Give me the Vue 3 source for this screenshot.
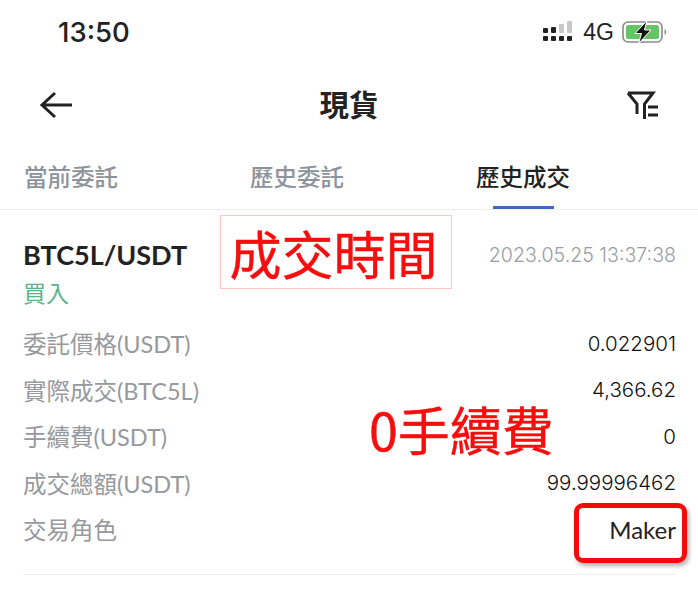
<script setup>
const rows = [
  { label: '委託價格(USDT)', value: '0.022901' },
  { label: '實際成交(BTC5L)', value: '4,366.62' },
  { label: '手續費(USDT)', value: '0' },
  { label: '成交總額(USDT)', value: '99.99996462' },
  { label: '交易角色', value: 'Maker', text: true }
]
const tabs = ['當前委託', '歷史委託', '歷史成交']
</script>

<template>
  <div class="page">
    <div class="status">
      <span class="time">13:50</span>
      <div class="status-right">
        <svg class="signal" width="32" height="22" viewBox="0 0 32 22">
          <g fill="#222">
            <rect x="1" y="7" width="5" height="5" rx="1" /><rect x="9" y="6" width="5" height="6" rx="1" />
            <rect x="1" y="15" width="5" height="5" rx="1" /><rect x="9" y="15" width="5" height="5" rx="1" />
            <rect x="17" y="15" width="5" height="5" rx="1" /><rect x="25" y="15" width="5" height="5" rx="1" />
          </g>
          <g fill="#c8c8c8">
            <rect x="17" y="3" width="5" height="9" rx="1" /><rect x="25" y="0" width="5" height="12" rx="1" />
          </g>
        </svg>
        <span class="net">4G</span>
        <svg width="46" height="24" viewBox="0 0 46 24">
          <rect x="1" y="2" width="39" height="20" rx="5" fill="none" stroke="#8a8a8a" stroke-width="1.6" />
          <rect x="4" y="5" width="33" height="14" rx="2.500" fill="#64c466" />
          <path d="M42.500 9 C44.500 10 44.500 14 42.500 15 Z" fill="#8a8a8a" />
          <path d="M25 0.500 L13 13.500 H19.500 L16.500 23.500 L29 10 H22.500 Z" fill="#111" stroke="#fff" stroke-width="1" />
        </svg>
      </div>
    </div>

    <div class="nav">
      <svg class="back" width="34" height="28" viewBox="0 0 34 28">
        <path d="M16 2 L3 14 L16 26 M3 14 H33" fill="none" stroke="#222" stroke-width="3" />
      </svg>
      <span class="title">現貨</span>
      <svg class="filter" width="34" height="30" viewBox="0 0 34 30">
        <path d="M1 3 H26 L17.500 14 V29 M1 3 L10 14 V24" fill="none" stroke="#222" stroke-width="3" />
        <path d="M21 17 H31 M21 25 H31" fill="none" stroke="#222" stroke-width="3" />
      </svg>
    </div>

    <div class="tabs">
      <div v-for="(t, i) in tabs" :key="t" class="tab" :class="{ active: i === 2 }">{{ t }}</div>
    </div>

    <div class="card">
      <div class="head">
        <span class="pair">BTC5L/USDT</span>
        <span class="date">2023.05.25 13:37:38</span>
      </div>
      <div class="side">買入</div>
      <div class="rows">
        <div v-for="r in rows" :key="r.label" class="row">
          <span class="label">{{ r.label }}</span>
          <span class="value" :class="{ word: r.text }">{{ r.value }}</span>
        </div>
      </div>
    </div>

    <div class="note time-note">成交時間</div>
    <div class="note fee-note">0手續費</div>
    <div class="maker-box"></div>
  </div>
</template>

<style scoped>
.page {
  position: relative;
  width: 698px;
  height: 602px;
  overflow: hidden;
  background: #fff;
  font-family: "Liberation Sans", "Noto Sans CJK TC", sans-serif;
  color: #222;
}
.status {
  height: 64px;
  display: flex;
  align-items: center;
  justify-content: space-between;
  padding: 0 30px 0 58px;
}
.time {
  font-family: Inter, sans-serif;
  font-size: 27.500px;
  font-weight: 500;
}
.status-right {
  display: flex;
  align-items: center;
  gap: 8px;
}
.signal {
  margin-right: 1px;
}
.net {
  font-size: 23px;
  font-family: "Liberation Sans", sans-serif;
}
.nav {
  height: 80px;
  display: flex;
  align-items: center;
  justify-content: space-between;
  padding: 0 39px;
}
.back {
  margin-top: 2px;
}
.filter {
  margin-right: -2px;
  margin-top: 1px;
}
.title {
  font-size: 29.500px;
  font-weight: 700;
  font-family: "Noto Sans CJK TC", sans-serif;
  margin-bottom: 2px;
  margin-left: -2px;
}
.tabs {
  height: 66px;
  display: grid;
  grid-template-columns: 226px 226px 1fr;
  padding-left: 24px;
  border-bottom: 1px solid #eee;
  box-sizing: border-box;
}
.tab {
  position: relative;
  font-family: "Noto Sans CJK TC", sans-serif;
  font-size: 23.500px;
  font-weight: 500;
  color: #8d939c;
  line-height: 64px;
}
.tab.active {
  color: #222;
}
.tab.active::after {
  content: "";
  position: absolute;
  left: 17px;
  bottom: 0;
  width: 61px;
  height: 3px;
  background: #3f68c4;
}
.card {
  margin: 0 22px 0 23px;
  padding: 27px 0 0;
  height: 365px;
  box-sizing: border-box;
  border-bottom: 1px solid #eee;
}
.head {
  display: flex;
  justify-content: space-between;
  align-items: center;
  height: 34px;
}
.pair {
  font-family: Lato, sans-serif;
  font-size: 27px;
  font-weight: 700;
  color: #222;
}
.date {
  font-family: Inter, sans-serif;
  font-size: 19.600px;
  font-weight: 300;
  color: #9a9da3;
  margin-top: 1px;
}
.side {
  font-family: "Noto Sans CJK TC", sans-serif;
  font-size: 23px;
  color: #5cb38b;
  line-height: 32px;
  margin-top: 5px;
}
.rows {
  margin-top: 12px;
}
.row {
  display: flex;
  justify-content: space-between;
  align-items: center;
  height: 46.500px;
}
.label {
  font-family: Lato, "Noto Sans CJK TC", sans-serif;
  font-size: 23.500px;
  font-weight: 400;
  color: #96999e;
}
.value {
  font-family: Inter, sans-serif;
  font-size: 20.500px;
  font-weight: 300;
  color: #111;
}
.value.word {
  font-family: Lato, sans-serif;
  font-size: 24px;
  font-weight: 400;
  color: #222;
}
.note {
  position: absolute;
  font-family: "Noto Sans CJK TC", sans-serif;
  font-weight: 400;
  color: #f80d0d;
  white-space: nowrap;
  -webkit-text-stroke: 0.4px #f80d0d;
}
.time-note {
  left: 220px;
  top: 215px;
  width: 232px;
  height: 74px;
  box-sizing: border-box;
  border: 1px solid #ffc4c4;
  padding-right: 5px;
  font-size: 52px;
  line-height: 73px;
  text-align: center;
}
.fee-note {
  left: 369px;
  top: 396px;
  font-size: 52px;
  line-height: 66px;
}
.maker-box {
  position: absolute;
  left: 574px;
  top: 503px;
  width: 113px;
  height: 60px;
  box-sizing: border-box;
  border: 5px solid #f50a0a;
  border-radius: 9px;
  box-shadow: 2px 3px 4px rgba(0, 0, 0, 0.3);
}
</style>
